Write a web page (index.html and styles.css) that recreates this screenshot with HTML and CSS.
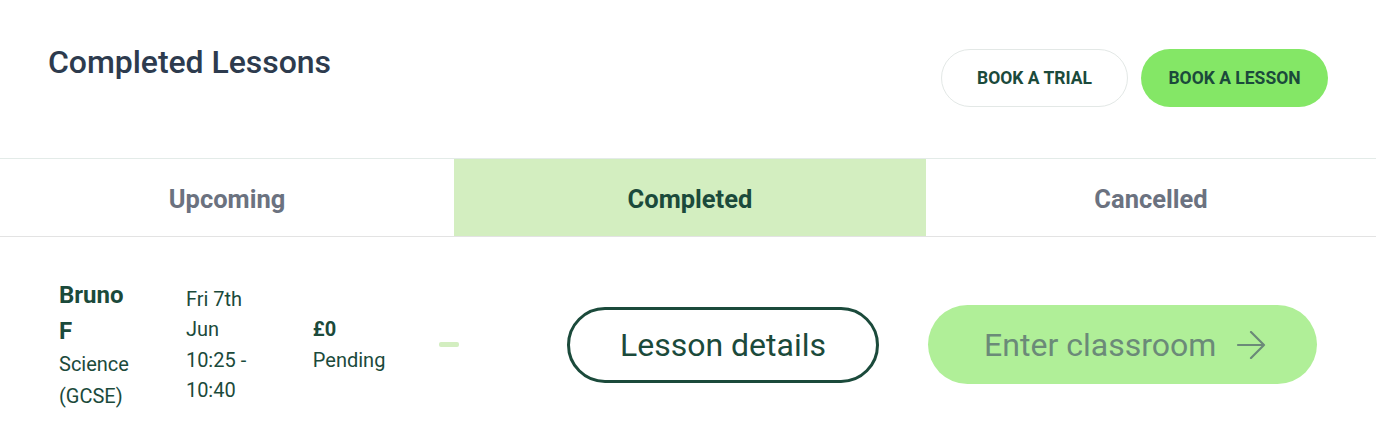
FILE: index.html
```html
<!DOCTYPE html>
<html>
<head>
  <link rel="stylesheet" href="styles.css">
</head>
<body>
  <div class="header">
    <h1 class="title">Completed Lessons</h1>
    <div class="header-actions">
      <button class="btn btn-outline">BOOK A TRIAL</button>
      <button class="btn btn-green">BOOK A LESSON</button>
    </div>
  </div>

  <!-- tabs -->
  <div class="tabs">
    <div class="tab">Upcoming</div>
    <div class="tab active">Completed</div>
    <div class="tab">Cancelled</div>
  </div>

  <div class="lesson-row">
    <div class="col-name">
      <div class="name">Bruno F</div>
      <div class="subject">Science (GCSE)</div>
    </div>
    <div class="col-date">Fri 7th Jun 10:25 - 10:40</div>
    <div class="col-price">
      <div class="price">£0</div>
      <div>Pending</div>
    </div>
    <div class="col-status"><span class="dash"></span></div>
    <button class="btn-details">Lesson details</button>
    <button class="btn-classroom">
      Enter classroom
      <svg width="30" height="28" viewBox="0 0 30 28" fill="none" stroke="currentColor" stroke-width="2.2" stroke-linecap="round" stroke-linejoin="round">
        <path d="M2 14h26M15 1l13 13-13 13"/>
      </svg>
    </button>
  </div>
</body>
</html>
```

FILE: styles.css
```css
body {
  margin: 0;
  font-family: Roboto, "Liberation Sans", sans-serif;
  background: #fff;
  color: #1b4a3b;
}

/* header with title and two buttons */
.header {
  display: flex;
  justify-content: space-between;
  align-items: flex-start;
  padding: 43px 48px 0 48px;
  height: 115px;
  border-bottom: 1px solid #e3ebe8;
}

.title {
  margin: 0;
  font-size: 32px;
  font-weight: 500;
  letter-spacing: -0.05px;
  color: #2d3b4e;
}

.header-actions {
  display: flex;
  gap: 13px;
  margin-top: 6px;
}

.btn {
  width: 187px;
  height: 58px;
  border-radius: 29px;
  font-family: Roboto, sans-serif;
  font-size: 17.5px;
  font-weight: 700;
  color: #1b4a3b;
  padding: 0;
  cursor: pointer;
}

.btn-outline {
  background: #fff;
  border: 1px solid #e3e8e6;
}

.btn-green {
  background: #84e766;
  border: none;
}

/* tabs */
.tabs {
  display: grid;
  grid-template-columns: 454px 472px 1fr;
  height: 77px;
  border-bottom: 1px solid #e3e3e3;
}

.tab {
  display: flex;
  align-items: center;
  justify-content: center;
  padding-top: 2px;
  font-size: 25.5px;
  font-weight: 700;
  color: #6b7280;
}

.tab.active {
  background: #d3eec0;
  color: #1b4a3b;
}

/* lesson row */
.lesson-row {
  display: flex;
  align-items: center;
  padding: 40px 59px 0 59px;
  font-size: 20px;
  line-height: 30.5px;
}

.col-name {
  width: 127px;
}

.name {
  width: 80px;
  font-size: 24px;
  font-weight: 700;
  line-height: 36px;
}

.subject {
  width: 80px;
  line-height: 31.5px;
}

.col-date {
  width: 76px;
  margin-right: 51px;
}

.col-price {
  width: 126px;
}

.price {
  font-weight: 700;
}

.dash {
  display: block;
  width: 20px;
  height: 5px;
  border-radius: 2px;
  background: #d3eec0;
}

.col-status {
  width: 128px;
}

.btn-details {
  width: 313px;
  height: 76px;
  border: 3px solid #1b4a3b;
  border-radius: 38px;
  background: #fff;
  font-family: Roboto, sans-serif;
  font-size: 32px;
  color: #1b4a3b;
  margin-right: 49px;
  padding: 0;
  cursor: pointer;
}

.btn-classroom {
  display: flex;
  align-items: center;
  justify-content: center;
  gap: 20px;
  width: 389px;
  height: 79px;
  border: none;
  border-radius: 40px;
  background: #b0ef98;
  font-family: Roboto, sans-serif;
  font-size: 32px;
  color: #6b8a78;
  padding: 0 0 0 5px;
}
```
